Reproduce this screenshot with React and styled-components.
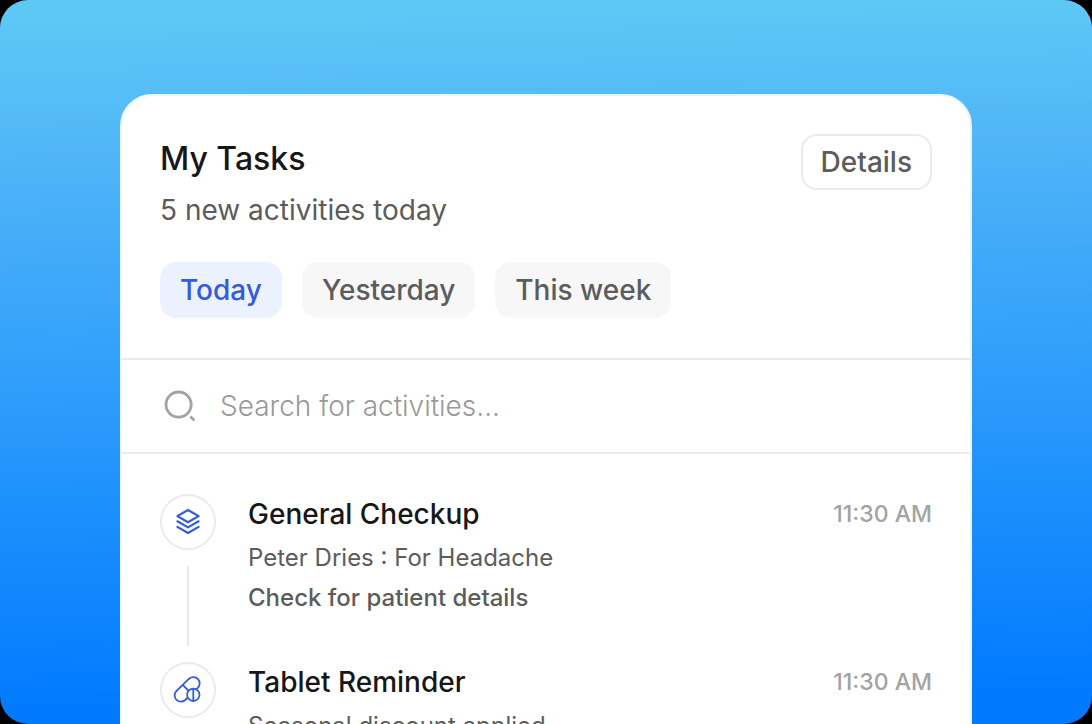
import React, { useState } from 'react';
import styled, { createGlobalStyle } from 'styled-components';

const GlobalStyle = createGlobalStyle`
  * {
    box-sizing: border-box;
  }

  body {
    margin: 0;
    background-color: #000;
    font-family: Inter, "Liberation Sans", sans-serif;
  }
`;

const Stage = styled.main`
  height: 100vh;
  padding: 94px 120px 0;
  border-radius: 28px;
  background: linear-gradient(179deg, #5ec8f5 2%, #4fb5f8 22%, #007aff 96%);
  overflow: hidden;
`;

const Card = styled.section`
  border: 2px solid #ebf5fc;
  border-radius: 32px 32px 0 0;
  background-color: #fff;
`;

const Header = styled.header`
  padding: 38px 38px 40px;
  border-bottom: 2px solid #ebebeb;
`;

const HeaderTop = styled.div`
  display: flex;
  align-items: flex-start;
  justify-content: space-between;
`;

const Title = styled.h1`
  margin: 0 0 6px;
  color: #171717;
  font-size: 32px;
  font-weight: 500;
  line-height: 50px;
`;

const Subtitle = styled.p`
  margin: 0;
  color: #5c5c5c;
  font-size: 28px;
  line-height: 40px;
`;

const Button = styled.button`
  height: 56px;
  padding: 0 18px;
  border: 2px solid ${(props) => props.$border || 'transparent'};
  border-radius: 16px;
  background-color: ${(props) => props.$bg || '#fff'};
  color: ${(props) => props.$color || '#5c5c5c'};
  font-family: inherit;
  font-size: 28px;
  font-weight: 500;
  line-height: 40px;
  cursor: pointer;
`;

const Tabs = styled.div`
  display: flex;
  gap: 20px;
  margin-top: 32px;
`;

const SearchBar = styled.label`
  display: flex;
  align-items: center;
  gap: 20px;
  padding: 26px 38px;
  border-bottom: 2px solid #ebebeb;
`;

const SearchInput = styled.input`
  flex: 1;
  min-width: 0;
  height: 40px;
  padding: 0;
  border: none;
  outline: none;
  background: transparent;
  color: #171717;
  font-family: inherit;
  font-size: 28px;
  font-weight: 300;

  &::placeholder {
    color: #999;
    opacity: 1;
  }
`;

const List = styled.ul`
  margin: 0;
  padding: 40px 38px;
  list-style: none;
`;

const Item = styled.li`
  display: flex;
  gap: 32px;
  min-height: 168px;
`;

const Rail = styled.div`
  display: flex;
  flex-direction: column;
  align-items: center;
  gap: 16px;
  padding-bottom: 16px;
`;

const IconCircle = styled.div`
  display: flex;
  align-items: center;
  justify-content: center;
  width: 56px;
  height: 56px;
  border: 2px solid #ebebeb;
  border-radius: 50%;
`;

const Line = styled.div`
  flex: 1;
  width: 2px;
  background-color: #ebebeb;
`;

const Content = styled.div`
  flex: 1;
`;

const ItemTitle = styled.h2`
  margin: 0 0 4px;
  color: #171717;
  font-size: 28px;
  font-weight: 500;
  line-height: 40px;
`;

const ItemText = styled.p`
  margin: 0;
  color: #5c5c5c;
  font-size: 24px;
  font-weight: ${(props) => (props.$strong ? 500 : 400)};
  line-height: 40px;
`;

const Time = styled.time`
  color: #a3a3a3;
  font-size: 23px;
  font-weight: 500;
  line-height: 40px;
`;

const SearchIcon = () => (
  <svg width="40" height="40" viewBox="0 0 40 40" fill="none" stroke="#a3a3a3" strokeWidth="2.8" aria-hidden="true">
    <circle cx="18.6" cy="18.6" r="12.6" />
    <path d="M30.4 30.4 L34.4 34.4" />
  </svg>
);

const LayersIcon = () => (
  <svg width="32" height="32" viewBox="0 0 32 32" fill="none" stroke="#335cdd" strokeWidth="2.2" strokeLinecap="round" strokeLinejoin="round" aria-hidden="true">
    <path d="M16 4 L26.6 10.1 L16 16.2 L5.4 10.1 Z" />
    <path d="M5.4 15.3 L16 21.4 L26.6 15.3" />
    <path d="M5.4 20.9 L16 27 L26.6 20.9" />
  </svg>
);

const PillsIcon = () => (
  <svg width="32" height="32" viewBox="0 0 32 32" fill="none" stroke="#335cdd" strokeWidth="1.8" strokeLinecap="round" strokeLinejoin="round" aria-hidden="true">
    <path d="M17.1 4.7 A6.3 6.3 0 0 1 26 13.6 L24.4 15.2" />
    <path d="M17.1 4.7 L4.3 17.1 A6.3 6.3 0 0 0 13.2 26 L15.2 24" />
    <path d="M10.7 10.9 L16.4 16.6" />
    <circle cx="21.3" cy="20.8" r="6.2" />
    <path d="M21.3 14.6 V27" />
  </svg>
);

const tabs = ['Today', 'Yesterday', 'This week'];

const tasks = [
  {
    title: 'General Checkup',
    text: 'Peter Dries : For Headache',
    action: 'Check for patient details',
    time: '11:30 AM',
    Icon: LayersIcon,
  },
  {
    title: 'Tablet Reminder',
    text: 'Seasonal discount applied',
    time: '11:30 AM',
    Icon: PillsIcon,
  },
];

const App = () => {
  const [activeTab, setActiveTab] = useState('Today');
  const [search, setSearch] = useState('');

  return (
    <Stage>
      <GlobalStyle />
      <Card>
        <Header>
          <HeaderTop>
            <div>
              <Title>My Tasks</Title>
              <Subtitle>5 new activities today</Subtitle>
            </div>
            <Button type="button" $border="#ebebeb">Details</Button>
          </HeaderTop>
          <Tabs>
            {tabs.map((tab) => (
              <Button
                key={tab}
                type="button"
                aria-pressed={tab === activeTab}
                $bg={tab === activeTab ? '#ebf1ff' : '#f7f7f7'}
                $color={tab === activeTab ? '#335cdd' : '#5c5c5c'}
                onClick={() => setActiveTab(tab)}
              >
                {tab}
              </Button>
            ))}
          </Tabs>
        </Header>
        <SearchBar>
          <SearchIcon />
          <SearchInput
            type="text"
            aria-label="Search for activities"
            placeholder="Search for activities..."
            value={search}
            onChange={(e) => setSearch(e.target.value)}
          />
        </SearchBar>
        <List>
          {tasks.map(({ title, text, action, time, Icon }) => (
            <Item key={title}>
              <Rail>
                <IconCircle>
                  <Icon />
                </IconCircle>
                <Line />
              </Rail>
              <Content>
                <ItemTitle>{title}</ItemTitle>
                <ItemText>{text}</ItemText>
                {action && <ItemText $strong>{action}</ItemText>}
              </Content>
              <Time>{time}</Time>
            </Item>
          ))}
        </List>
      </Card>
    </Stage>
  );
};

export default App;
